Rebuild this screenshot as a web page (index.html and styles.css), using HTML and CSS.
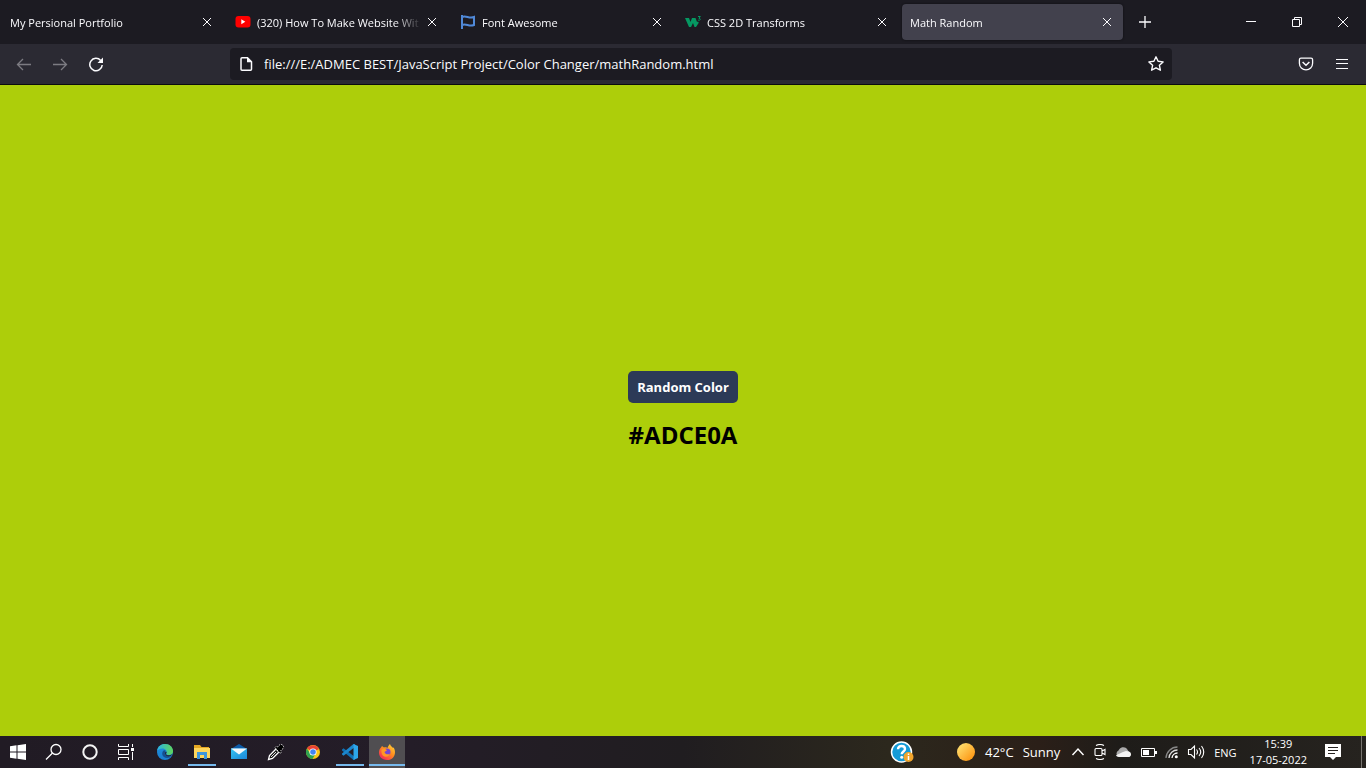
FILE: index.html
```html
<!DOCTYPE html>
<html lang="en">
<head>
<meta charset="utf-8">
<title>Math Random</title>
<link rel="stylesheet" href="styles.css">
</head>
<body>
<svg class="defs" aria-hidden="true">
  <defs>
    <symbol id="close" viewBox="0 0 10 10"><path d="M1 1l8 8M9 1L1 9" fill="none" stroke="currentColor" stroke-width="1"/></symbol>
    <linearGradient id="edgeA" x1="0" y1="0" x2="1" y2="0"><stop offset="0" stop-color="#2bb3e6"/><stop offset="1" stop-color="#5fd65a"/></linearGradient>
    <linearGradient id="edgeB" x1="0" y1="0" x2="0" y2="1"><stop offset="0" stop-color="#1c8fe0"/><stop offset="1" stop-color="#1b7fd0"/></linearGradient>
    <linearGradient id="foxA" x1="1" y1="0" x2="0.2" y2="1"><stop offset="0" stop-color="#ffe23c"/><stop offset=".5" stop-color="#ff8a1e"/><stop offset="1" stop-color="#f5245c"/></linearGradient>
    <linearGradient id="sun" x1="0" y1="0" x2="1" y2="1"><stop offset="0.1" stop-color="#ffe070"/><stop offset="0.9" stop-color="#fd9410"/></linearGradient>
    <linearGradient id="mail" x1="0" y1="0" x2="1" y2="1"><stop offset="0" stop-color="#35c4f2"/><stop offset="1" stop-color="#1a86d8"/></linearGradient>
  </defs>
</svg>

<header class="browser">
  <nav class="tabbar" aria-label="Tabs">
    <div class="tab"><a class="tab-title" href="#portfolio">My Persional Portfolio</a><button class="tab-close" aria-label="Close tab"><svg width="10" height="10"><use href="#close"/></svg></button></div>
    <div class="tab">
      <svg class="favicon" viewBox="0 0 16 16"><rect x="0.5" y="2" width="15" height="11.5" rx="3" fill="#f00"/><path d="M6.300 5.300v5l4-2.500z" fill="#fff"/></svg>
      <a class="tab-title" href="#youtube">(320) How To Make Website Wit</a><button class="tab-close" aria-label="Close tab"><svg width="10" height="10"><use href="#close"/></svg></button></div>
    <div class="tab">
      <svg class="favicon" viewBox="0 0 16 16"><path d="M2 1v14M2 3c4-2 7 2 12 0v8c-5 2-8-2-12 0" fill="none" stroke="#5089d8" stroke-width="2"/></svg>
      <a class="tab-title" href="#fontawesome">Font Awesome</a><button class="tab-close" aria-label="Close tab"><svg width="10" height="10"><use href="#close"/></svg></button></div>
    <div class="tab">
      <svg class="favicon" viewBox="0 0 16 16"><path d="M0 4h4l1.500 4L7 4h3.500l1.500 4 1-.5.8 1.200L11 13H9.500L8 9l-2 4H4z" fill="#059862"/><path d="M13 2.500h2.300L14 4.300c1.800 0 1.600 2.200-.2 2l-.8-.3" fill="none" stroke="#059862"/></svg>
      <a class="tab-title" href="#css">CSS 2D Transforms</a><button class="tab-close" aria-label="Close tab"><svg width="10" height="10"><use href="#close"/></svg></button></div>
    <div class="tab tab-active"><a class="tab-title" href="#math" aria-current="page">Math Random</a><button class="tab-close" aria-label="Close tab"><svg width="10" height="10"><use href="#close"/></svg></button></div>
    <button class="new-tab" aria-label="New tab"><svg width="12" height="12" viewBox="0 0 12 12"><path d="M6 0v12M0 6h12" stroke="currentColor" stroke-width="1.300"/></svg></button>
    <div class="window-controls">
      <button aria-label="Minimize"><svg width="10" height="10" viewBox="0 0 10 10"><path d="M0 4.500h10" stroke="currentColor"/></svg></button>
      <button aria-label="Restore"><svg width="10" height="10" viewBox="0 0 10 10"><path d="M.5 2.500h7v7h-7zM2.500 2.500v-2h7v7h-2" fill="none" stroke="currentColor"/></svg></button>
      <button aria-label="Close window"><svg width="10" height="10" viewBox="0 0 10 10"><path d="M0 0l10 10M10 0L0 10" stroke="currentColor"/></svg></button>
    </div>
  </nav>
  <div class="toolbar">
    <button class="tool tool-off" aria-label="Back"><svg width="16" height="16" viewBox="0 0 16 16"><path d="M15 8.500H1.500M7 3L1.500 8.500 7 14" fill="none" stroke="currentColor" stroke-width="1.300"/></svg></button>
    <button class="tool tool-off" aria-label="Forward"><svg width="16" height="16" viewBox="0 0 16 16"><path d="M1 8.500h13.500M9 3l5.500 5.500L9 14" fill="none" stroke="currentColor" stroke-width="1.300"/></svg></button>
    <button class="tool" aria-label="Reload"><svg width="16" height="16" viewBox="0 0 16 16"><path d="M12.700 4.500A6.200 6.200 0 1 0 14.200 9" fill="none" stroke="currentColor" stroke-width="1.500"/><path d="M15 1.500V7H9.500z" fill="currentColor"/></svg></button>
    <div class="urlbar">
      <svg width="16" height="16" viewBox="0 0 16 16"><path d="M4 1.700h5.500l4 4v7.600a1 1 0 0 1-1 1H4a1 1 0 0 1-1-1V2.700a1 1 0 0 1 1-1z" fill="none" stroke="#fbfbfe" stroke-width="1.500"/><path d="M9 1v5.200h5z" fill="#fbfbfe"/></svg>
      <input class="url" type="text" aria-label="Address" value="file:///E:/ADMEC BEST/JavaScript Project/Color Changer/mathRandom.html">
      <button class="star" aria-label="Bookmark"><svg width="18" height="18" viewBox="0 0 18 18"><path d="M9 1.800l2.100 4.500 5 .6-3.700 3.400 1 4.900L9 12.800l-4.400 2.400 1-4.900L1.900 6.900l5-.6z" fill="none" stroke="#fbfbfe" stroke-width="1.400" stroke-linejoin="round"/></svg></button>
    </div>
    <button class="tool" aria-label="Pocket"><svg width="16" height="16" viewBox="0 0 16 16"><path d="M3 2.200h10a1.600 1.600 0 0 1 1.600 1.600v3.500a6.600 6.600 0 0 1-13.200 0V3.800A1.600 1.600 0 0 1 3 2.200z" fill="none" stroke="currentColor" stroke-width="1.300"/><path d="M4.600 6L8 9.300 11.400 6" fill="none" stroke="currentColor" stroke-width="1.500"/></svg></button>
    <button class="tool" aria-label="Menu"><svg width="16" height="16" viewBox="0 0 16 16"><path d="M2 3.500h12M2 7.500h12M2 12.500h12" stroke="currentColor" stroke-width="1.200"/></svg></button>
  </div>
</header>

<main class="page">
  <button class="random">Random Color</button>
  <h2 class="code">#ADCE0A</h2>
</main>

<footer class="taskbar">
  <div class="launch">
    <button aria-label="Start"><svg width="16" height="16" viewBox="0 0 16 16"><path d="M0 2.200l6.500-.9v6.200H0zM7.500 1.200L16 0v7.500H7.500zM0 8.500h6.500v6.200L0 13.800zM7.500 8.500H16V16l-8.500-1.200z" fill="#fff"/></svg></button>
    <button aria-label="Search"><svg width="18" height="18" viewBox="0 0 18 18"><circle cx="11" cy="6.500" r="5" fill="none" stroke="#fff" stroke-width="1.300"/><path d="M7.500 10L1 16.500" stroke="#fff" stroke-width="1.300"/></svg></button>
    <button aria-label="Cortana"><svg width="16" height="16" viewBox="0 0 16 16"><circle cx="8" cy="8" r="6.700" fill="none" stroke="#f4f4f4" stroke-width="2"/></svg></button>
    <button aria-label="Task view"><svg width="16" height="16" viewBox="0 0 16 16"><path d="M.5 0v2.500h10V0M.5 16v-2.500h10V16M.5 5.500h10v5H.5zM14.500 0v3M14.500 8v8" fill="none" stroke="#fff"/><path d="M13 4h3v3h-3z" fill="#fff"/></svg></button>
  </div>
  <div class="apps">
    <button aria-label="Edge"><svg width="18" height="18" viewBox="0 0 18 18"><circle cx="9" cy="9" r="8" fill="url(#edgeB)"/><path d="M1 8C2 3 5 1 9 1c5 0 8 3.500 8 7 0 3-2 4-4.500 4-2 0-2.500-1-1.800-2C11 8 9.500 5.500 6.500 5.500 4 5.500 2 6.500 1 8z" fill="url(#edgeA)"/><path d="M7 8c-2 3 0 7 4 7 2 0 4-1 5-2-3 1.300-7 .5-7-3.500 0-.8.400-1.500.7-1.800C9 7 7.700 7 7 8z" fill="#155092"/><path d="M10 8.500c1.500 1-.8 2 .5 3.200 1.500 1.200 4.500.5 6-.7-1 2-5 4-7 .5-.8-1.500-.3-2.500.5-3z" fill="#241c27"/></svg></button>
    <button class="open" aria-label="File Explorer"><svg width="18" height="18" viewBox="0 0 18 18"><path d="M1 2h6l1.500 2H16v4H1z" fill="#e5a823"/><path d="M1 5h16v10H1z" fill="#fed65c"/><path d="M4 9h10v7h-3v-4H7v4H4z" fill="#3d96dc"/></svg></button>
    <button aria-label="Mail"><svg width="18" height="18" viewBox="0 0 18 18"><path d="M1 6l8-5 8 5v3H1z" fill="#0c5ba8"/><path d="M1 5.500h16V16H1z" fill="url(#mail)"/><path d="M1 5.500h16L9 11.500z" fill="#f2f7fa"/></svg></button>
    <button aria-label="Color picker"><svg width="18" height="18" viewBox="0 0 18 18"><path d="M1.500 16.500l1-4 6.500-6.500 3 3-6.500 6.500z" fill="#111" stroke="#fff" stroke-width="1.300"/><path d="M8 4.500l1-1 1.500.5 2-2c2-2 5.500 1.500 3.500 3.500l-2.300 2.300.5 1.700-1.200 1z" fill="#000" stroke="#eee" stroke-width=".9" stroke-dasharray="1.500 1"/><path d="M4 14l5-5" stroke="#ddd" stroke-width="1"/></svg></button>
    <button aria-label="Chrome"><svg width="16" height="16" viewBox="0 0 16 16"><circle cx="8" cy="8" r="7" fill="#fbc817"/><path d="M8 8L1.900 4.500A7 7 0 0 1 14.100 5z" fill="#e94335"/><path d="M1.900 4.500A7 7 0 0 0 7.500 15l3.200-5.500L8 8l-3 1z" fill="#2ea350"/><circle cx="8" cy="8" r="3.600" fill="#fff"/><circle cx="8" cy="8" r="2.800" fill="#4285f4"/></svg></button>
    <button class="open" aria-label="Visual Studio Code"><svg width="18" height="18" viewBox="0 0 18 18"><path d="M1 6.500l1.500-1.300L14 14v2.500l-1.500.5L1 7.500z" fill="#1070b3"/><path d="M1 11.500l1.500 1.300L14 4V1.500L12.500 1 1 10.500z" fill="#1c86cc"/><path d="M12.500 1L17 3v12l-4.500 2z" fill="#2da6ea"/></svg></button>
    <button class="open current" aria-label="Firefox"><svg width="18" height="18" viewBox="0 0 18 18"><path d="M4 3l2 1.500C8 4 9 5 9.500 5 10 3 11 2 12 1c.3 2 2 2.500 3 4 .5-.1.300-1 .3-1C19 9 16.500 17 9 17 1 17-1 8.500 3 4.500z" fill="url(#foxA)"/><circle cx="9" cy="9" r="3.500" fill="#7547d2"/><path d="M3.500 6.500C6 5 8 6 9 7.200L6.500 9c.5 2.500 4 3 5.500 1.500-1.500 5-8 4-8.500-1z" fill="#ff9824"/></svg></button>
  </div>
  <div class="tray">
    <button class="help" aria-label="Get help"><svg width="24" height="24" viewBox="0 0 24 24"><circle cx="11.500" cy="12" r="10" fill="#159bd7" stroke="#fff" stroke-width="1.500"/><path d="M8 9.200C8 4.800 15 5 15 9c0 2.500-3.300 2.500-3.300 5.300" fill="none" stroke="#fff" stroke-width="2.400"/><circle cx="11.700" cy="17.300" r="1.500" fill="#fff"/><circle cx="18.500" cy="17" r="5" fill="#f0a52c"/><path d="M18.500 13.500V15M18.500 16v4" stroke="#fff" stroke-width="1.500"/></svg></button>
    <button class="weather"><svg width="20" height="20" viewBox="0 0 20 20"><circle cx="10" cy="10" r="9" fill="url(#sun)"/></svg><span>42°C</span><span>Sunny</span></button>
    <div class="status">
      <button aria-label="Show hidden icons"><svg width="14" height="16" viewBox="0 0 14 16"><path d="M1.500 11L7 5l5.500 6" fill="none" stroke="#fff" stroke-width="1.400"/></svg></button>
      <button aria-label="Meet now"><svg width="14" height="16" viewBox="0 0 14 16"><path d="M3 1.500Q7-.5 11 1.500M3 14.500q4 2 8 0M2 5.500Q2 4.500 3 4.500h5q1 0 1 1v5q0 1-1 1H3q-1 0-1-1zM9 7l3-1.500v5L9 9" fill="none" stroke="#fff" stroke-width="1.100"/></svg></button>
      <button aria-label="OneDrive"><svg width="18" height="16" viewBox="0 0 18 16"><path d="M4 13a3.500 3.500 0 0 1-.5-6.500A5 5 0 0 1 12 5l2 3-6 5z" fill="#aaa"/><path d="M4 13c-1.500 0-2.500-.7-3-1.700L8 8l3-1 3 .5a3 3 0 0 1 .5 5.500z" fill="#f2f2f2"/></svg></button>
      <button aria-label="Battery"><svg width="16" height="16" viewBox="0 0 16 16"><path d="M.5 4.500h13v8H.5z" fill="none" stroke="#fff"/><path d="M2 6h6v5H2zM14 7h2v3h-2z" fill="#fff"/></svg></button>
      <button aria-label="Wi-Fi"><svg width="14" height="16" viewBox="0 0 14 16"><g fill="none" stroke-width="1.300"><path d="M1 14A11.500 11.500 0 0 1 12.500 3" stroke="#888"/><path d="M4 14a8.500 8.500 0 0 1 8.500-8" stroke="#ddd"/><path d="M7 14a5.500 5.500 0 0 1 5.500-5" stroke="#fff"/></g><circle cx="11.300" cy="12.800" r="1.500" fill="#fff"/></svg></button>
      <button aria-label="Volume"><svg width="18" height="16" viewBox="0 0 18 16"><path d="M1.500 5.500H4L7.500 2v12L4 10.500H1.500zM9.500 5.500q2 2.500 0 5M12 4q3.500 4 0 8M14.500 2q4.500 6 0 12" fill="none" stroke="#fff" stroke-width="1.100"/></svg></button>
    </div>
    <button class="lang">ENG</button>
    <button class="clock"><span>15:39</span><span>17-05-2022</span></button>
    <button class="notice" aria-label="Notifications"><svg width="16" height="16" viewBox="0 0 16 16"><path d="M0 0h16v13h-5l-3 3-3-3H0z" fill="#fff"/><path d="M3 3.500h10M3 6.500h10M3 9.500h7" stroke="#26221f"/></svg></button>
    <button class="show-desktop" aria-label="Show desktop"></button>
  </div>
</footer>
</body>
</html>
```
FILE: styles.css
```css
* { box-sizing: border-box; }
body {
  margin: 0;
  min-height: 100vh;
  display: flex;
  flex-direction: column;
  background: #adce0a;
  font-family: "Segoe UI", "Open Sans", "Noto Sans", sans-serif;
  font-size: 11px;
}
button {
  border: 0;
  padding: 0;
  margin: 0;
  background: none;
  color: inherit;
  font: inherit;
  display: flex;
  align-items: center;
  justify-content: center;
}
svg { flex: none; }
.defs { position: absolute; width: 0; height: 0; }

.browser { background: #2b2a33; color: #fbfbfe; border-bottom: 1px solid #0c0c0d; }
.tabbar {
  display: flex;
  align-items: center;
  gap: 4px;
  height: 44px;
  padding-left: 2px;
  background: #1c1b22;
}
.tab {
  flex: 0 1 221px;
  min-width: 0;
  height: 36px;
  padding: 0 6px 0 8px;
  display: flex;
  align-items: center;
  border-radius: 4px;
}
.tab-active { background: #42414d; box-shadow: 0 0 2px #0c0c0d; }
.favicon { width: 16px; height: 16px; margin-right: 6px; }
.tab-title {
  flex: 1;
  min-width: 0;
  overflow: hidden;
  white-space: nowrap;
  line-height: 20px;
  padding-top: 2px;
  color: inherit;
  text-decoration: none;
  mask-image: linear-gradient(to left, transparent, #000 28px);
}
.tab-close { width: 20px; height: 20px; }
.new-tab { width: 36px; height: 36px; }
.window-controls { display: flex; margin-left: auto; }
.window-controls button { width: 46px; height: 44px; }

.toolbar { display: flex; align-items: center; height: 40px; padding: 0 6px; }
.tool { width: 36px; height: 32px; }
.tool-off { color: #7c7b82; }
.urlbar {
  flex: 1;
  display: flex;
  align-items: center;
  height: 32px;
  margin: 0 116px;
  padding: 0 7px 0 8px;
  border-radius: 4px;
  background: #1c1b22;
}
.url {
  flex: 1;
  min-width: 0;
  padding: 0 10px;
  border: 0;
  outline: 0;
  background: none;
  color: #fbfbfe;
  font: inherit;
  font-size: 13px;
}

.page {
  flex: 1;
  display: flex;
  flex-direction: column;
  align-items: center;
  justify-content: center;
  gap: 16px;
}
.random {
  height: 32px;
  padding: 0 9px;
  border-radius: 5px;
  background: #2c3a57;
  color: #fff;
  font-size: 13px;
  font-weight: 700;
}
.code { margin: 0; font-size: 24px; line-height: 32px; color: #000; }

.taskbar {
  display: flex;
  justify-content: space-between;
  height: 32px;
  color: #fff;
  background: linear-gradient(to right, #211b24, #241d28 30%, #201d20 50%, #2c281d 65%, #2b1f18 76%, #1e1c19 82%, #26231f);
}
.launch, .apps, .tray, .status { display: flex; align-items: center; }
.launch button, .apps button { width: 36px; height: 32px; }
.apps { gap: 1px; margin: 0 auto 0 3px; }
.open { background: linear-gradient(#76b9ed, #76b9ed) center 28px / 28px 2px no-repeat; }
.current { background-color: #504e51; background-size: 36px 2px; }
.weather { gap: 9px; margin: 0 11px 0 42px; font-size: 13px; }
.status { gap: 8px; }
.lang { margin: 0 13px 0 9px; }
.clock { flex-direction: column; line-height: 16px; }
.notice { margin: 0 20px 0 18px; }
.show-desktop { width: 5px; height: 32px; border-left: 1px solid #77746f; }
```
